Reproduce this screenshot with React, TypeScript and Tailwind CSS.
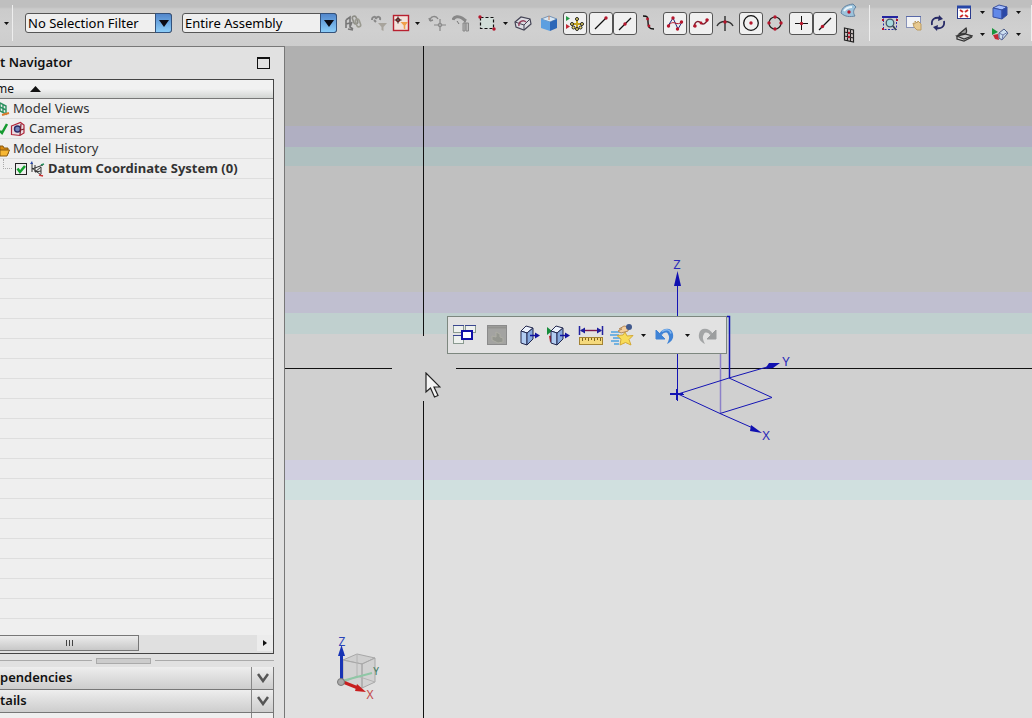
import type { ReactNode } from "react";
import clsx from "clsx";

const Svg = ({ w = 18, h = 18, children }: { w?: number; h?: number; children: ReactNode }) => (
  <svg width={w} height={h} viewBox={`0 0 ${w} ${h}`} fill="none" className="block shrink-0" aria-hidden="true">
    {children}
  </svg>
);

const Dot = ({ x, y, r = 1.7 }: { x: number; y: number; r?: number }) => <circle cx={x} cy={y} r={r} fill="#b5152b" />;

/* ---- toolbar icons ---- */

const AssemblyLink = () => (
  <Svg>
    <path d="M2 6l4-3v4M2 6v8M2 10l4-1M4 15l5 1M8 8l-2 5 3 2M6 5v8" stroke="#777" strokeWidth="1.6" />
    <rect x="9" y="2" width="4" height="8" rx="2" stroke="#8d8d86" strokeWidth="1.6" transform="rotate(-20 11 6)" />
    <rect x="12" y="5" width="4" height="8" rx="2" stroke="#9a9a90" strokeWidth="1.6" transform="rotate(-20 14 9)" />
  </Svg>
);

const FilterReset = () => (
  <Svg>
    <path d="M2 6c0-4 4-4 4-1 1-3 5-3 4 1M4 6l2 2" stroke="#888" strokeWidth="2" />
    <path d="M8 9h9l-3.5 4v4l-2-1v-3z" fill="#a8a49c" />
  </Svg>
);

const FilterActive = () => (
  <Svg>
    <rect x="1.5" y="1.5" width="15" height="15" fill="#f2e3dc" stroke="#b8202f" strokeWidth="1.4" />
    <path d="M6 2.500v7M2.500 6h7" stroke="#222" />
    <circle cx="6" cy="6" r="1.800" stroke="#611" />
    <path d="M8.500 8h7.500l-2.700 3.500v4l-1.600-1v-3z" fill="#f0a04a" />
  </Svg>
);

const RotatePoint = () => (
  <Svg>
    <path d="M2 7c0-5 6-6 8-2M2 7l-1-3M2 7l3-1" stroke="#888" strokeWidth="1.400" />
    <path d="M12 5v12M6 11h12" stroke="#888" strokeWidth="1.200" />
    <circle cx="12" cy="11" r="1.800" fill="#aaa" stroke="#888" />
  </Svg>
);

const MoveStack = () => (
  <Svg>
    <path d="M1 6c1-4 6-4 9-2l4 3" stroke="#888" strokeWidth="3" />
    <path d="M5 7l2 3M13 7v3" stroke="#777" />
    <path d="M11 9h2v8h-2zM14 9h2.500v8H14z" fill="#bbb" stroke="#888" />
  </Svg>
);

const RectSelect = () => (
  <Svg>
    <rect x="2.500" y="3.500" width="13" height="11" fill="#d2ded9" stroke="#111" strokeWidth="1.200" strokeDasharray="3 2" />
    <Dot x={2} y={3} />
    <Dot x={16} y={15} />
  </Svg>
);

const WireHouse = () => (
  <Svg>
    <path d="M1 8l6-5 9 2 1 5-7 6-8-3z" fill="#dcdce2" stroke="#445" strokeWidth="1.200" />
    <path d="M1 8l9 3 6-6M10 11v5" stroke="#445" />
    <path d="M5 12c-1-4 4-7 7-4" stroke="#93405c" strokeWidth="1.400" />
  </Svg>
);

const BlueBox = () => (
  <Svg>
    <path d="M1 5l8-3 8 3-7 3z" fill="#d7e7f5" stroke="#7794b5" />
    <path d="M1 5l9 3v9l-9-3z" fill="#5c9fe0" />
    <path d="M17 5l-7 3v9l7-3z" fill="#2c67b8" />
    <path d="M9 2v4" stroke="#d08050" />
  </Svg>
);

const SnapPoints = () => (
  <Svg>
    <path d="M0 2l4 2.500L0 7z" fill="#259a45" />
    <path d="M0 10l4 2.500L0 15z" fill="#c32835" />
    <path d="M11 6v8M7 10h8" stroke="#c3a21f" strokeWidth="2" />
    {[
      [11, 5],
      [6, 10],
      [16, 10],
      [11, 15],
      [7.5, 13.5],
      [14.5, 13.5],
    ].map(([x, y]) => (
      <circle key={`${x}-${y}`} cx={x} cy={y} r="1.500" fill="#ecd964" stroke="#222" />
    ))}
  </Svg>
);

const EndPoint = () => (
  <Svg>
    <path d="M3 15L14 4" stroke="#111" strokeWidth="1.200" />
    <Dot x={14} y={4} />
  </Svg>
);

const MidPoint = () => (
  <Svg>
    <path d="M3 16L15 4" stroke="#111" strokeWidth="1.200" />
    <Dot x={9} y={10} />
  </Svg>
);

const ControlPoint = () => (
  <Svg>
    <path d="M3 2c5 0 5 1 5 6s1 7 6 7" stroke="#111" strokeWidth="1.400" />
    <Dot x={7.5} y={5} r={1.4} />
    <Dot x={9} y={12} r={1.4} />
  </Svg>
);

const SplinePole = () => (
  <Svg>
    <path d="M2 12L7 4l5 11 4-7" stroke="#222a78" />
    <path d="M2 12c3-3 4-4 7-3s4 1 7-1" stroke="#b5152b" />
    <Dot x={2.5} y={12} />
    <Dot x={7} y={4} />
    <Dot x={11.5} y={15} />
    <Dot x={15.5} y={8} />
  </Svg>
);

const SplinePoint = () => (
  <Svg>
    <path d="M2 13c1-7 5-6 7-4s5 1 7-4" stroke="#7b1b2b" strokeWidth="1.500" />
    <Dot x={3} y={12} />
    <Dot x={9} y={9} r={1.4} />
    <Dot x={15} y={6} />
  </Svg>
);

const Intersection = () => (
  <Svg>
    <path d="M9 2v15" stroke="#111" strokeWidth="1.200" />
    <path d="M1 12c3-6 13-6 16 0" stroke="#333" strokeWidth="1.400" />
    <Dot x={9} y={8} />
  </Svg>
);

const ArcCenter = () => (
  <Svg>
    <circle cx="9" cy="9" r="7.300" stroke="#111" strokeWidth="1.300" />
    <Dot x={9} y={9} />
  </Svg>
);

const Quadrant = () => (
  <Svg>
    <circle cx="9" cy="9" r="6" stroke="#222" strokeWidth="1.200" />
    <Dot x={9} y={3} />
    <Dot x={9} y={15} />
    <Dot x={3} y={9} />
    <Dot x={15} y={9} />
  </Svg>
);

const ExistingPoint = () => (
  <Svg>
    <path d="M9.500 2v14M3 9.500h13" stroke="#111" />
    <Dot x={9.5} y={9.5} />
  </Svg>
);

const PointOnCurve = () => (
  <Svg>
    <path d="M3 16L15 4" stroke="#111" strokeWidth="1.200" />
    <Dot x={6.5} y={12.5} />
  </Svg>
);

const FacePoint = () => (
  <Svg>
    <path d="M1 10C2 4 6 2 13 1l3 3c-3 3-3 6-1 9-5 1-10 1-14-3z" fill="#9cc3dc" stroke="#6583a0" />
    <path d="M4 8c2-3 5-4 8-4" stroke="#e9f4fa" strokeWidth="2" />
    <Dot x={9} y={9} />
  </Svg>
);

const GridPoint = () => (
  <Svg>
    <path d="M4.500 3l9 2v12l-9-2zM4.500 7l9 2M4.500 11l9 2M7.500 4v12M10.500 5v12" fill="#d6cccc" stroke="#222" strokeWidth="1.200" />
    <Dot x={9} y={8} r={1.2} />
    <Dot x={9} y={12} r={1.2} />
  </Svg>
);

const FitView = () => (
  <Svg>
    <rect x="2.500" y="3.500" width="13" height="12" stroke="#2727a8" strokeDasharray="2 1.500" />
    <path d="M1 3h16" stroke="#2424a0" strokeWidth="2" />
    <circle cx="9" cy="9" r="3.800" fill="#a7d8dc" stroke="#456" strokeWidth="1.300" />
    <path d="M12 12l3 4" stroke="#345" strokeWidth="1.800" />
    <path d="M1 6h2M15 6h2M1 15h2" stroke="#b5152b" strokeWidth="2" />
  </Svg>
);

const PanView = () => (
  <Svg>
    <rect x="1.500" y="2.500" width="14" height="11" fill="#f2f3f5" stroke="#8893b8" />
    <path d="M1 2.500h15" stroke="#5868a8" />
    <path d="M9 13l-1-4 2 1V7l2 2 1-2 3 3v6h-4z" fill="#e7c98f" stroke="#bb9b62" />
  </Svg>
);

const RotateView = () => (
  <Svg>
    <path d="M3 11C2 5 6 3 11 4M15 7c1 6-3 8-8 7" stroke="#272a66" strokeWidth="1.800" />
    <path d="M10 1l4 4-5 2zM8 17l-4-4 5-2z" fill="#272a66" />
  </Svg>
);

const WindowFit = () => (
  <Svg>
    <rect x="2.500" y="3.500" width="13" height="12" fill="#fff" stroke="#2a3a8c" />
    <path d="M2 4h14" stroke="#2846a6" strokeWidth="3" />
    <path d="M5 7l3 2M13 7l-3 2M5 14l3-2M13 14l-3-2" stroke="#cc2b2b" strokeWidth="2" />
  </Svg>
);

const ShadedBox = () => (
  <Svg>
    <path d="M2 5l6-3 8 2-5 3z" fill="#a6bfff" stroke="#384f9e" />
    <path d="M2 5l9 2v9l-9-2z" fill="#6188e8" stroke="#384f9e" />
    <path d="M16 4l-5 3v9l5-4z" fill="#2a48a8" stroke="#384f9e" />
  </Svg>
);

const SectionLines = () => (
  <Svg>
    <path d="M4 9L11 3c1 3 1 5-1 6z" fill="#999" stroke="#333" strokeWidth="1.300" />
    <path d="M2 11l8-2 7 2-8 3z" fill="#c8c8c8" stroke="#333" strokeWidth="1.300" />
    <path d="M2 11v3l7 2 8-4" stroke="#333" strokeWidth="1.300" />
  </Svg>
);

const SectionClip = () => (
  <Svg>
    <path d="M1 3l6 4-6 3z" fill="#19953d" />
    <path d="M2 10l5-1 1 6-4-1z" fill="#c52834" />
    <path d="M8 8l5-4 4 4-6 7-3-2z" fill="#cddff0" stroke="#4a5a85" />
    <path d="M8 8l4 2 5-3M12 10l-1 5" stroke="#6d7bab" />
  </Svg>
);

const Caret = () => (
  <svg width="5" height="3" viewBox="0 0 5 3" className="block shrink-0" aria-hidden="true">
    <path d="M0 0h5L2.500 3z" fill="#111" />
  </svg>
);

/* ---- popup toolbar icons ---- */

const Cascade = () => (
  <Svg w={24} h={22}>
    <rect x="0.500" y="1.500" width="10" height="7" fill="#eef1ee" stroke="#8a9a90" />
    <rect x="12.500" y="1.500" width="10" height="7" fill="#eef1ee" stroke="#8a9a90" />
    <rect x="0.500" y="11.500" width="10" height="8" fill="#eef1ee" stroke="#8a9a90" />
    <path d="M0 1.500h11M12 1.500h11M0 11.500h8" stroke="#3a4790" />
    <rect x="9" y="7" width="10" height="8" fill="#fff" stroke="#1010a8" strokeWidth="2" />
  </Svg>
);

const Disabled = () => (
  <Svg w={22} h={22}>
    <rect x="1.500" y="1.500" width="19" height="19" fill="#a3a3a1" stroke="#8b8b8b" />
    <path d="M2 3.500h18" stroke="#92928f" strokeWidth="2" />
    <path d="M6 12l4 1V8l4 2v3l3 1v4l-5 1-6-3z" fill="#94968f" stroke="#adada4" />
  </Svg>
);

const Extrude = ({ flags = false }: { flags?: boolean }) => (
  <Svg w={24} h={24}>
    {flags && (
      <>
        <path d="M0 4l5 4-5 4z" fill="#168c3a" />
        <path d="M2 13l4-1 1 6-4 1z" fill="#c32532" />
      </>
    )}
    <path d="M4 8l5-5 7 2-6 5z" fill="#eef4fd" stroke="#23284e" />
    <path d="M4 8l6 2v12l-6-2z" fill="#b3cdf2" stroke="#23284e" />
    <path d="M16 5l-6 5v12l6-6z" fill="#86a8de" stroke="#23284e" />
    <path d="M13 12.500h6" stroke="#1212a0" strokeWidth="1.500" />
    <path d="M18 9.500l5 3-5 3z" fill="#1212a0" />
  </Svg>
);

const Measure = () => (
  <Svg w={26} h={22}>
    <path d="M1.500 2v9M24.500 2v9" stroke="#2323a0" strokeWidth="1.500" />
    <path d="M3 6.500h20" stroke="#7a1850" strokeWidth="1.400" />
    <path d="M2 6.500l5-3v6zM24 6.500l-5-3v6z" fill="#1d1d9c" />
    <rect x="1.500" y="13.500" width="23" height="7" fill="#f5d97c" stroke="#a38333" />
    <path d="M4.500 14v3M7.500 14v2M10.500 14v3M13.500 14v2M16.500 14v3M19.500 14v2M22.500 14v3" stroke="#7c6420" />
  </Svg>
);

const StarFeature = () => (
  <Svg w={26} h={24}>
    <path d="M1 9h10M0 12h9M3 15h7M1 18h8M4 21h5" stroke="#4da3df" strokeWidth="1.300" />
    <path d="M15 9l2 4 6-.5-4 4 2 5.500-5.500-2.500L10 22l1-6-4-3.500 6-.5z" fill="#f8dc59" stroke="#d3a935" />
    <path d="M9 6l5-3 5 1-1 4-7 2-3-2 4-2z" fill="#f4cf9d" stroke="#b38a5b" />
    <circle cx="19" cy="4" r="3" fill="#40598d" />
  </Svg>
);

const Undo = () => (
  <Svg w={20} h={20}>
    <path d="M4 9c4-7 13-7 14 0 1 5-2 8-6 10 2-4 3-7 1-10-1-2-4-2-6 1z" fill="#3f83d6" />
    <path d="M1 5v9h9z" fill="#3f83d6" stroke="#3f83d6" />
    <path d="M7 6.500c4-3 8-2 9 2" stroke="#86b8ee" strokeWidth="1.500" />
  </Svg>
);

const Redo = () => (
  <Svg w={20} h={20}>
    <path d="M16 9C12 2 3 2 2 9c-1 5 2 8 6 10-2-4-3-7-1-10 1-2 4-2 6 1z" fill="#a3a5a6" />
    <path d="M19 5v9h-9z" fill="#9c9e9f" stroke="#9c9e9f" />
  </Svg>
);

/* ---- tree icons ---- */

const ViewsIcon = () => (
  <Svg w={10} h={16}>
    <path d="M0 2l6 3v8l-6-3zM0 6l6 3M3 3v8" stroke="#2b9160" strokeWidth="1.400" />
    <path d="M2 14l7-2" stroke="#dd7a2c" strokeWidth="2" />
  </Svg>
);

const TickIcon = () => (
  <Svg w={8} h={16}>
    <path d="M0 10l2 2 5-9" stroke="#159a30" strokeWidth="2.500" />
  </Svg>
);

const CameraIcon = () => (
  <Svg w={16} h={16}>
    <path d="M1.500 5l9-3.500L14 4v8l-4 2.500-8.500-1z" fill="#e9dce2" stroke="#b02438" strokeWidth="1.200" />
    <circle cx="7.500" cy="8" r="3" fill="#7184bd" stroke="#2b2b66" strokeWidth="1.400" />
    <path d="M11 3l-1 11M11 9l3-1" stroke="#7a1828" strokeWidth="1.200" />
  </Svg>
);

const FolderIcon = () => (
  <Svg w={10} h={16}>
    <path d="M0 5h3l1 2h4v6H0z" fill="#d98c10" stroke="#8a5a10" />
    <path d="M0 9h9.500L7 15H0z" fill="#f7b733" stroke="#8a5a10" />
  </Svg>
);

const DatumIcon = () => (
  <Svg w={16} h={16}>
    <path d="M3 2v9M3 7l9 7M3 8l11-4M6 4v7l6-1M6 11l6-5v7" stroke="#333" />
    <path d="M1 3l2-3 1 3" fill="#2846a6" />
    <path d="M10 14l4 1" stroke="#c33" strokeWidth="1.500" />
    <path d="M12 4l3-1" stroke="#2b9160" strokeWidth="1.500" />
  </Svg>
);

/* ---- toolbar ---- */

type ToolProps = { label: string; boxed?: boolean; narrow?: boolean; children: ReactNode };

const Tool = ({ label, boxed, narrow, children }: ToolProps) => (
  <button
    type="button"
    aria-label={label}
    className={clsx(
      "flex items-center justify-center shrink-0",
      narrow ? "w-5" : "w-6",
      boxed ? "h-[23px] rounded-[3px] border border-[#555] bg-[#f0f0f0]" : "h-5",
    )}
  >
    {children}
  </button>
);

const More = ({ label }: { label: string }) => (
  <button type="button" aria-label={label} className="flex h-5 w-3 shrink-0 items-center justify-center">
    <Caret />
  </button>
);

const Combo = ({ id, label, options, className }: { id: string; label: string; options: string[]; className: string }) => (
  <div className={clsx("relative h-5 shrink-0", className)}>
    <label htmlFor={id} className="sr-only">
      {label}
    </label>
    <select
      id={id}
      className="block h-5 w-full appearance-none rounded-[3px] border border-[#555] bg-[#efefef] pl-0.5 text-[13px] leading-[18px] text-black"
    >
      {options.map((o) => (
        <option key={o}>{o}</option>
      ))}
    </select>
    <span className="pointer-events-none absolute inset-y-0 right-0 flex w-[17px] items-center justify-center rounded-r-[3px] border border-[#33527c] bg-linear-to-b from-[#5186cb] to-[#8ccdf8]">
      <svg width="10" height="7" viewBox="0 0 10 7" aria-hidden="true">
        <path d="M0 0h10L5 7z" fill="#0b0b14" />
      </svg>
    </span>
  </div>
);

const Divider = () => <div className="h-9 w-px shrink-0 bg-[#eee]" />;

const Toolbar = () => (
  <header className="flex h-[46px] shrink-0 items-center overflow-hidden bg-[linear-gradient(#bfbfbf_7px,#cbcbcb_9px,#d0d0d0_30px,#cdcdcd)]">
    <div className="flex w-[25px] shrink-0 items-center justify-between pr-3">
      <More label="Menu" />
      <Divider />
    </div>
    <Combo id="type-filter" label="Type filter" options={["No Selection Filter"]} className="w-[147px]" />
    <Combo id="scope" label="Selection scope" options={["Entire Assembly"]} className="ml-2.5 w-[155px]" />
    <div className="ml-1 flex shrink-0 items-center gap-0.5">
      <Tool label="Interpart link"><AssemblyLink /></Tool>
      <div className="flex items-center">
        <Tool label="Reset filters"><FilterReset /></Tool>
        <Tool label="Detailed filter" narrow><FilterActive /></Tool>
        <More label="Filter options" />
      </div>
      <div className="flex items-center">
        <Tool label="Rotate point"><RotatePoint /></Tool>
        <Tool label="Move"><MoveStack /></Tool>
      </div>
      <div className="flex items-center">
        <Tool label="Rectangle select"><RectSelect /></Tool>
        <More label="Selection shape" />
        <Tool label="Wireframe"><WireHouse /></Tool>
      </div>
      <Tool label="Solid body"><BlueBox /></Tool>
      <Tool label="Snap point" boxed><SnapPoints /></Tool>
      <div className="flex items-center">
        <Tool label="End point" boxed><EndPoint /></Tool>
        <Tool label="Mid point" boxed><MidPoint /></Tool>
        <Tool label="Control point"><ControlPoint /></Tool>
      </div>
      <Tool label="Spline pole" boxed><SplinePole /></Tool>
      <div className="flex items-center">
        <Tool label="Spline point" boxed><SplinePoint /></Tool>
        <Tool label="Intersection"><Intersection /></Tool>
      </div>
      <div className="flex items-center">
        <Tool label="Arc center" boxed><ArcCenter /></Tool>
        <Tool label="Quadrant point"><Quadrant /></Tool>
      </div>
      <div className="flex items-center">
        <Tool label="Existing point" boxed><ExistingPoint /></Tool>
        <Tool label="Point on curve" boxed><PointOnCurve /></Tool>
        <div className="flex flex-col gap-0.5">
          <Tool label="Point on face"><FacePoint /></Tool>
          <Tool label="Grid point"><GridPoint /></Tool>
        </div>
      </div>
    </div>
    <div className="ml-2 flex shrink-0 items-center">
      <Divider />
      <div className="ml-2 flex items-center">
        <Tool label="Fit"><FitView /></Tool>
        <Tool label="Pan"><PanView /></Tool>
        <Tool label="Rotate"><RotateView /></Tool>
      </div>
      <div className="ml-0.5 grid grid-cols-[24px_12px_24px_12px] gap-y-0.5">
        <Tool label="Fit window"><WindowFit /></Tool>
        <More label="Fit options" />
        <Tool label="Shaded"><ShadedBox /></Tool>
        <More label="Rendering styles" />
        <Tool label="Section lines"><SectionLines /></Tool>
        <More label="Section options" />
        <Tool label="Clip section"><SectionClip /></Tool>
        <More label="Clip options" />
      </div>
    </div>
    <div className="ml-auto">
      <Divider />
    </div>
  </header>
);

/* ---- navigator ---- */

const Row = ({ children }: { children: ReactNode }) => <li className="flex h-5 items-center whitespace-nowrap">{children}</li>;

const Section = ({ title }: { title: string }) => (
  <button
    type="button"
    className="flex h-[23px] w-full items-stretch border-r border-b border-[#777] bg-linear-to-b from-[#eee] to-[#cdcdcd] text-left"
  >
    <span className="flex-1 text-[13px] leading-5 font-semibold text-[#111]">{title}</span>
    <span className="flex w-[22px] items-center justify-center border-l border-[#888]">
      <svg width="12" height="10" viewBox="0 0 12 10" aria-hidden="true">
        <path d="M1 1l5 7 5-7" fill="none" stroke="#555" strokeWidth="2.500" />
      </svg>
    </span>
  </button>
);

const Navigator = () => (
  <aside className="flex w-[285px] shrink-0 flex-col border-t border-r border-[#777] bg-[#e1e1e1] pr-2.5 text-[13px] text-[#333]">
    <div className="flex h-8 items-center justify-between pr-1">
      <h2 className="font-semibold text-[#111]">t Navigator</h2>
      <button type="button" aria-label="Undock" className="h-3 w-[13px] border border-t-2 border-[#111]" />
    </div>
    <div className="flex flex-1 flex-col border-t border-r border-b border-[#444] bg-[#efefef]">
      <button
        type="button"
        className="flex h-[19px] items-center gap-4 border-b border-[#777] bg-linear-to-b from-[#f1f1f1] from-50% to-[#d2d5d3] text-[12px] text-[#111]"
      >
        <span className="-ml-1">me</span>
        <svg width="11" height="6" viewBox="0 0 11 6" aria-hidden="true">
          <path d="M0 6h11L5.500 0z" fill="#111" />
        </svg>
      </button>
      <ul className="flex-1 bg-[repeating-linear-gradient(#efefef_0_19px,#dedede_19px_20px)]">
        <Row>
          <ViewsIcon />
          <span className="ml-[3px]">Model Views</span>
        </Row>
        <Row>
          <TickIcon />
          <span className="mr-[3px] ml-0.5"><CameraIcon /></span>
          Cameras
        </Row>
        <Row>
          <FolderIcon />
          <span className="ml-[3px]">Model History</span>
        </Row>
        <Row>
          <span className="mr-[3px] ml-[3px] h-2.5 w-[9px] self-start border-b border-l border-dotted border-[#aaa]" />
          <input
            id="datum-csys"
            type="checkbox"
            defaultChecked
            className="peer h-3 w-3 shrink-0 appearance-none border border-[#222] bg-[#eee]"
          />
          <span className="pointer-events-none -ml-3 hidden peer-checked:block">
            <Svg w={12} h={12}>
              <path d="M2.500 5.500l2.500 3.500L10 3" stroke="#12a02c" strokeWidth="2.500" />
            </Svg>
          </span>
          <label htmlFor="datum-csys" className="ml-0.5 flex items-center gap-[3px] font-bold">
            <DatumIcon />
            Datum Coordinate System (0)
          </label>
        </Row>
      </ul>
      <div className="flex h-[18px] items-start bg-[#e0e0e0]">
        <div className="flex h-4 w-[139px] items-center justify-center gap-0.5 border border-l-0 border-[#777] bg-linear-to-b from-[#ececec] to-[#c8c8c8]">
          <span className="h-1.5 w-px bg-[#444]" />
          <span className="h-1.5 w-px bg-[#444]" />
          <span className="h-1.5 w-px bg-[#444]" />
        </div>
        <button type="button" aria-label="Scroll right" className="ml-auto flex h-4 w-4 items-center justify-center bg-[#ececec]">
          <svg width="4" height="6" viewBox="0 0 4 6" aria-hidden="true">
            <path d="M0 0l4 3-4 3z" fill="#111" />
          </svg>
        </button>
      </div>
    </div>
    <div className="flex h-[13px] items-center gap-1">
      <span className="h-px w-[92px] bg-[#aaa]" />
      <span className="h-1.5 w-[55px] border border-[#aaa] bg-[#ccc]" />
      <span className="h-px flex-1 bg-[#aaa]" />
    </div>
    <Section title="pendencies" />
    <Section title="tails" />
    <div className="flex h-[5px] border-r border-[#777] bg-[#efefef]">
      <span className="ml-auto w-[22px] border-l border-[#888]" />
    </div>
  </aside>
);

/* ---- graphics view ---- */

const Datum = () => (
  <svg
    className="absolute top-[206px] left-[380px]"
    width="135"
    height="192"
    viewBox="665 252 135 192"
    fill="none"
    stroke="#1414b4"
    aria-label="Datum coordinate system"
  >
    <path d="M677.500 280V401M671 394.500h13" />
    <path d="M677 389v11M670 394h13" strokeWidth="2" />
    <path d="M677.500 271l3.500 15h-7z" fill="#1010b0" stroke="none" />
    <path d="M727 316.500h2.500V378" strokeWidth="1.500" />
    <path d="M720.500 354v59" stroke="#8c80c8" strokeWidth="1.500" />
    <path d="M678 394l51-16 43 19.500-52 16zM729 378l38-11M720 413.500l34 15" />
    <path d="M765 369l4-6 11 0-7 5zM751 425l11 8-12-2z" fill="#1010b0" stroke="none" />
    <g fill="#2a2ab8" stroke="none" fontSize="13" textAnchor="middle">
      <text x="677" y="269">Z</text>
      <text x="786" y="366">Y</text>
      <text x="766" y="440">X</text>
    </g>
  </svg>
);

const Triad = () => (
  <svg className="absolute bottom-4 left-[49px]" width="50" height="68" viewBox="334 634 50 68" fill="none" aria-label="View triad">
    <path d="M343 660l14-6 18 4-13 6z" fill="#cfcfcf" stroke="#a8a8a8" />
    <path d="M343 660l19 4v24l-19-5zM375 658v24l-13 6v-24z" fill="#c8c8c8" fillOpacity=".6" stroke="#a8a8a8" />
    <path d="M357 654v22M343 683l14-7 18 6" stroke="#b4b4b4" />
    <path d="M342 681l30-8" stroke="#8fc7a6" strokeWidth="2" />
    <path d="M341.500 680v-27" stroke="#1733b5" strokeWidth="3" />
    <path d="M341.500 645l3.500 11h-7z" fill="#1733b5" />
    <path d="M343 682l15 6" stroke="#c81e1e" strokeWidth="3" />
    <path d="M357 684l9 8-11-1z" fill="#c81e1e" />
    <circle cx="341" cy="682" r="3.500" fill="#aaa" stroke="#777" />
    <g fontSize="12" textAnchor="middle">
      <text x="342" y="646" fill="#2a44b8">Z</text>
      <text x="376" y="675" fontSize="10" fill="#3a7a5a">Y</text>
      <text x="370" y="699" fill="#c44a4a">X</text>
    </g>
  </svg>
);

const Cursor = () => (
  <svg className="absolute top-[326px] left-[140px]" width="16" height="27" viewBox="0 0 16 27" aria-hidden="true">
    <path d="M1 1v19l4.500-4 4 9 3.500-1.500-4-8.500H15z" fill="#f4f4f4" stroke="#222" strokeWidth="1.200" />
  </svg>
);

const PopupTool = ({ label, className, children }: { label: string; className: string; children: ReactNode }) => (
  <button type="button" aria-label={label} className={clsx("flex h-7 shrink-0 items-center justify-center", className)}>
    {children}
  </button>
);

const PopupBar = () => (
  <div
    role="toolbar"
    className="absolute top-[270px] left-[162px] flex h-[38px] w-[280px] items-center border border-[#7d877f] bg-[#e2e2e2] pl-px"
  >
    <PopupTool label="Windows" className="w-8"><Cascade /></PopupTool>
    <PopupTool label="Edit" className="w-8"><Disabled /></PopupTool>
    <PopupTool label="Extrude" className="w-8"><Extrude /></PopupTool>
    <PopupTool label="Section extrude" className="w-7"><Extrude flags /></PopupTool>
    <PopupTool label="Measure" className="w-9"><Measure /></PopupTool>
    <PopupTool label="Features" className="w-7"><StarFeature /></PopupTool>
    <More label="More features" />
    <PopupTool label="Undo" className="w-8"><Undo /></PopupTool>
    <More label="Undo history" />
    <PopupTool label="Redo" className="w-7"><Redo /></PopupTool>
  </div>
);

const Viewport = () => (
  <main className="relative min-w-0 flex-1 overflow-hidden bg-[linear-gradient(#b0b0b0_80px,#b0afc2_80px_101px,#afc0c0_101px_120px,#c0c0c0_120px_246px,#c0bfd0_246px_267px,#c0d0cf_267px_288px,#d0d0d0_288px_414px,#d0cfe0_414px_434px,#d0e0df_434px_454px,#e0e0e0_454px)]">
    <div className="absolute top-0 left-[138px] h-[290px] w-px bg-[#111]" />
    <div className="absolute top-[355px] bottom-0 left-[138px] w-px bg-[#111]" />
    <div className="absolute top-[322px] left-0 h-px w-[107px] bg-[#111]" />
    <div className="absolute top-[322px] right-0 left-[171px] h-px bg-[#111]" />
    <Datum />
    <PopupBar />
    <Triad />
    <Cursor />
  </main>
);

export default function App() {
  return (
    <div className="flex min-h-screen flex-col overflow-hidden bg-[#d0d0d0] font-['Noto_Sans','DejaVu_Sans',sans-serif]">
      <Toolbar />
      <div className="flex flex-1">
        <Navigator />
        <Viewport />
      </div>
    </div>
  );
}
